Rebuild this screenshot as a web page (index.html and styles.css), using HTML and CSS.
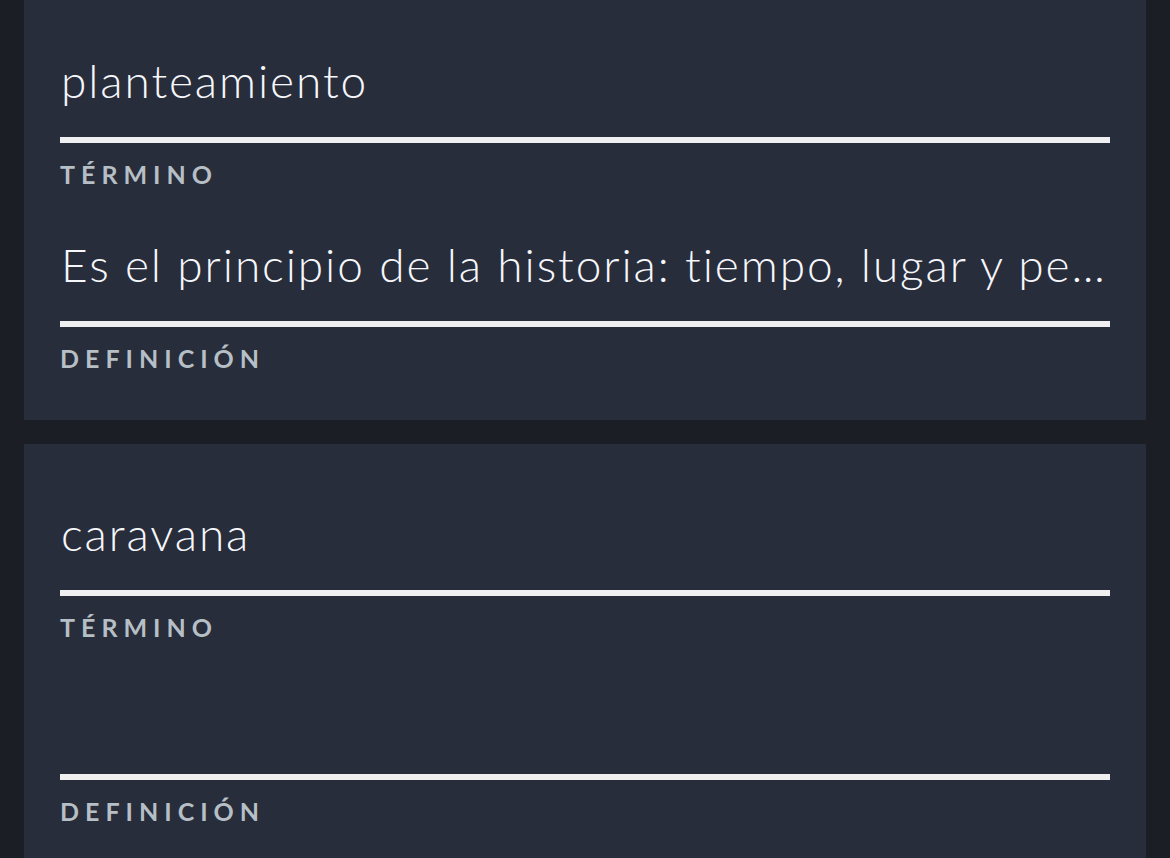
FILE: index.html
```html
<!DOCTYPE html>
<html lang="es">
<head>
    <meta charset="UTF-8">
    <meta name="viewport" content="width=device-width, initial-scale=1.0">
    <title>Tarjetas</title>
    <link rel="stylesheet" href="styles.css">
</head>
<body>
    <main class="card-list">
        <div class="card">
            <div class="field">
                <div class="field-value">planteamiento</div>
                <div class="field-label">Término</div>
            </div>
            <div class="field">
                <div class="field-value">Es el principio de la historia: tiempo, lugar y pe…</div>
                <div class="field-label">Definición</div>
            </div>
        </div>
        <div class="card">
            <div class="field">
                <div class="field-value">caravana</div>
                <div class="field-label">Término</div>
            </div>
            <div class="field">
                <div class="field-value"></div>
                <div class="field-label">Definición</div>
            </div>
        </div>
    </main>
</body>
</html>
```

FILE: styles.css
```css
body {
    font-family: Lato, "Open Sans", sans-serif;
    margin: 0;
    padding: 0;
    background-color: #1c1e26;
    overflow: hidden;
}

.card-list {
    display: flex;
    flex-direction: column;
    gap: 24px;
    padding: 0 24px;
    margin-top: -9px;
}

.card {
    background-color: #282d3b;
    padding: 14px 36px 47px;
}

.field-value {
    color: #f6f7fb;
    font-size: 46px;
    font-weight: 300;
    letter-spacing: 1.9px;
    font-variant-ligatures: none;
    line-height: 55px;
    height: 55px;
    padding: 48px 0 29px 1px;
    border-bottom: 6px solid #efeff1;
    white-space: nowrap;
    overflow: hidden;
    text-overflow: ellipsis;
}

.field-label {
    margin-top: 16px;
    color: #b6bfc5;
    font-size: 25px;
    line-height: 30px;
    font-weight: bold;
    letter-spacing: 6px;
    text-transform: uppercase;
}
```
